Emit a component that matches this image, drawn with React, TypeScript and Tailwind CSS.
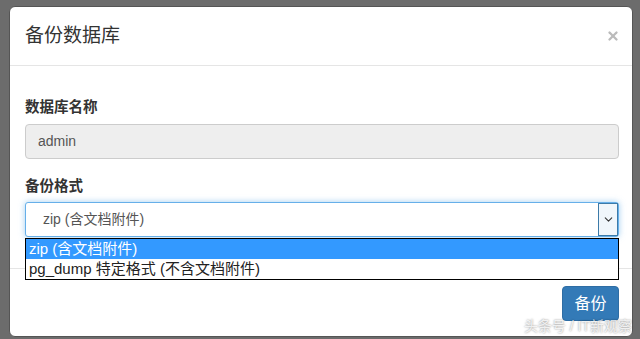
import { X, ChevronDown } from "lucide-react";

const font = { fontFamily: '"Liberation Sans", "Noto Sans CJK SC", sans-serif' };

export default function App() {
  return (
    <div className="relative h-[339px] w-[640px] overflow-hidden bg-[#6c6c6c] pt-[6px] pl-[9px]" style={font}>
      {/* modal */}
      <div className="relative flex h-[331px] w-[624px] flex-col rounded-[6px] border border-[#555] bg-white">
        {/* header */}
        <div className="flex h-[59px] items-center justify-between border-b border-[#e5e5e5] pl-[15px] pr-[12px]">
          <h4 className="text-[19px] text-[#333]">备份数据库</h4>
          <X className="h-[14px] w-[14px] text-[#bbb]" strokeWidth={4} />
        </div>

        {/* body */}
        <div className="relative flex flex-col pl-[15px] pr-[13px] pt-[31px]">
          <label className="text-[14.5px] font-bold leading-[20px] text-[#333]">数据库名称</label>
          <div className="mt-[7px] flex h-[35px] items-center rounded-[4px] border border-[#ccc] bg-[#eee] px-[12px] text-[14px] text-[#555]">
            admin
          </div>

          <label className="mt-[17px] text-[14.5px] font-bold leading-[20px] text-[#333]">备份格式</label>
          <div className="mt-[6px] flex h-[35px] items-center justify-between rounded-[3px] border border-[#66afe9] bg-white pl-[17px] text-[14px] text-[#555] shadow-[0_0_6px_rgba(102,175,233,0.6)]">
            <span>zip (含文档附件)</span>
            <span className="flex h-[33px] w-[20px] items-center justify-center border border-[#3c7aa8] bg-[#f0f6fb]">
              <ChevronDown className="h-[13px] w-[13px] text-[#333]" strokeWidth={2} />
            </span>
          </div>

          {/* open option list */}
          <div className="absolute left-[15px] right-[13px] top-[172px] z-10 border border-black bg-white text-[15px] leading-[20px]">
            <div className="bg-[#3399ff] pl-[3px] text-white">zip (含文档附件)</div>
            <div className="pl-[3px] text-[#222]">pg_dump 特定格式 (不含文档附件)</div>
          </div>
        </div>

        {/* footer */}
        <div className="mt-[31px] flex justify-end border-t border-[#e5e5e5] pl-[15px] pr-[13px] pt-[17px]">
          <button className="h-[35px] w-[57px] rounded-[4px] border border-[#2e6da4] bg-[#337ab7] text-[16px] text-white">
            备份
          </button>
        </div>
      </div>

      <div className="absolute bottom-[2px] right-[8px] text-[14px] text-white/80 [text-shadow:0_0_2px_rgba(0,0,0,0.5)]">
        头条号 / IT新观察
      </div>
    </div>
  );
}
